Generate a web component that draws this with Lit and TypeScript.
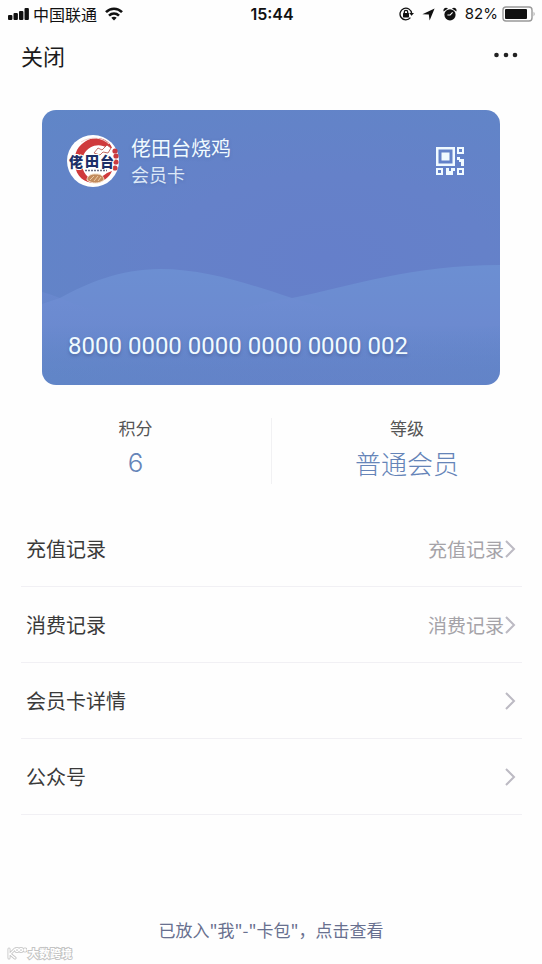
import { LitElement, html, css, nothing } from "lit";
import { customElement, property } from "lit/decorators.js";

@customElement("status-bar")
class StatusBar extends LitElement {
  static styles = css`
    :host {
      display: grid;
      grid-template-columns: 1fr auto 1fr;
      align-items: center;
      height: 28px;
      padding: 0 6px 0 8px;
      color: #111;
      font-size: 16px;
    }
    .left, .right { display: flex; align-items: center; }
    .left { gap: 4px; }
    .right { justify-content: flex-end; gap: 8px; }
    .wifi { margin-left: 4px; }
    .time { font: 600 16px/28px Inter, sans-serif; }
    .level { font: 400 15px/28px Inter, sans-serif; }
    .pair { display: flex; align-items: center; gap: 4px; }
    svg { display: block; }
  `;
  render() {
    return html`
      <div class="left">
        <svg width="21" height="14" viewBox="0 0 21 14" fill="#111">
          <rect x="0" y="8" width="4.400" height="5" rx="1"/><rect x="5.500" y="6" width="4.400" height="7" rx="1"/>
          <rect x="11" y="4" width="4.400" height="9" rx="1"/><rect x="16.500" y="1" width="4.400" height="12" rx="1"/>
        </svg>
        <span>中国联通</span>
        <svg class="wifi" width="18" height="14" viewBox="0 0 18 14" fill="none" stroke="#111" stroke-width="2.6">
          <path d="M1 5.2 C5.5 .6 12.5 .6 17 5.2"/><path d="M4 8.6 C7 5.8 11 5.8 14 8.6"/>
          <path d="M9 13.6 L6.3 10.8 C7.8 9.4 10.2 9.4 11.7 10.8 Z" fill="#111" stroke="none"/>
        </svg>
      </div>
      <span class="time">15:44</span>
      <div class="right">
        <svg width="15" height="14" viewBox="0 0 15 14" fill="none" stroke="#111" stroke-width="1.3">
          <path d="M11.4 10.6 A5.8 5.8 0 1 1 12.6 6.4"/><path d="M10.2 6 H15 L12.6 8.8 Z" fill="#111" stroke="none"/>
          <rect x="4" y="6" width="6" height="4.4" rx=".6" fill="#111" stroke="none"/>
          <path d="M5.3 6.4 V5 A1.7 1.7 0 0 1 8.7 5 V6.4"/>
        </svg>
        <svg width="13" height="13" viewBox="0 0 13 13" fill="#111"><path d="M12.6 .4 L7.6 12.6 L6.8 6.6 L.4 6.2 Z"/></svg>
        <svg width="14" height="14" viewBox="0 0 14 14" fill="#111">
          <circle cx="7" cy="7.8" r="5.6"/>
          <path d="M.6 4.4 C-.2 1.4 2.6 -.4 5 1.4 Z M13.4 4.4 C14.2 1.4 11.4 -.4 9 1.4 Z"/>
          <path d="M7 8.2 L9.6 5.4 M7.2 8 H4.4" stroke="#fff" stroke-width="1.1" fill="none"/>
        </svg>
        <div class="pair">
          <span class="level">82%</span>
          <svg width="34" height="16" viewBox="0 0 34 16">
            <rect x="1" y="1" width="29" height="14" rx="3" fill="#fff" stroke="#999" stroke-width="1.4"/>
            <rect x="3" y="3" width="22" height="10" rx="1" fill="#111"/>
            <path d="M31.6 5.6 Q33.6 8 31.6 10.4 Z" fill="#999"/>
          </svg>
        </div>
      </div>`;
  }
}

@customElement("shop-logo")
class ShopLogo extends LitElement {
  static styles = css`
    :host { display: block; }
    svg { display: block; }
    .name { font: 900 14px "Noto Sans CJK SC", sans-serif; fill: #1d2f68; stroke: #fff; stroke-width: 2px; paint-order: stroke; }
  `;
  render() {
    return html`<svg width="52" height="52" viewBox="0 0 52 52" role="img" aria-label="佬田台">
      <circle cx="26" cy="26" r="26" fill="#fff"/>
      <path d="M10 15 C16 5 28 0 38 5 C42 7 44 10 45 13 L40 13 C33 8 22 10 17 19 C13 28 15 36 21 42 C27 45 34 43 40 38 L45 36 C42 43 36 47 28 48 C17 48 9 41 8 30 C7 24 8 19 10 15 Z" fill="#cf3a3c"/>
      <path d="M14 7 C24 1 35 2 42 9" fill="none" stroke="#f3d5d2" stroke-width="1"/>
      <path d="M27 18 L31 13 L35 15 L40 10 L44 13 L41 18 L36 17 L33 20 Z" fill="#fff" stroke="#b5493f" stroke-width=".8"/>
      <g fill="#c93a40"><circle cx="48" cy="16" r="2.600"/><circle cx="49" cy="21" r="2.600"/><circle cx="49" cy="27" r="2.600"/><circle cx="48" cy="33" r="2.600"/></g>
      <text class="name" x="2" y="32">佬</text>
      <text class="name" x="18" y="31">田</text>
      <text class="name" x="33" y="32">台</text>
      <path d="M18 35.5 H40" stroke="#6d6f83" stroke-width="1.6" stroke-dasharray="2 1"/>
      <path d="M20 45 C20 41 24 38.5 29 39 C34 38.5 37 42 37 45 C32 49 25 49 20 45 Z" fill="#c28b5c" stroke="#f4dfc8" stroke-width="1"/>
      <path d="M23 45 L27 41 M27 46 L31 41 M31 46 L34 42" stroke="#f0d3ae" stroke-width=".9"/>
    </svg>`;
  }
}

@customElement("member-card")
class MemberCard extends LitElement {
  static styles = css`
    :host { display: block; }
    .card {
      display: grid;
      grid-template-rows: auto 1fr auto;
      min-height: 275px;
      box-sizing: border-box;
      padding: 25px 36px 24px 25px;
      border-radius: 14px;
      overflow: hidden;
      position: relative;
      color: #f0faff;
      background: radial-gradient(ellipse at 62% 54%, #657fca 0%, #6581c9 40%, #6086c7 100%);
    }
    .waves { position: absolute; left: 0; bottom: 0; width: 100%; height: 130px; }
    .head, .number { position: relative; }
    .head { display: flex; align-items: center; gap: 12px; }
    .names { flex: 1; text-shadow: 0 1px 3px #4a68a480; }
    .title, .sub { margin: 0; font-weight: 400; line-height: 26px; }
    .title { font-size: 20px; }
    .sub { font-size: 18px; opacity: .86; }
    .qr { border: 0; padding: 0; background: none; color: inherit; }
    .qr svg, .waves { display: block; }
    .number { grid-row: 3; margin: 0 0 0 1px; font: 400 24px/30px Roboto, sans-serif; text-shadow: 0 2px 3px #46598f99; }
  `;
  render() {
    return html`<section class="card">
      <svg class="waves" viewBox="0 0 458 130" preserveAspectRatio="none" aria-hidden="true">
        <defs>
          <linearGradient id="a" x1="0" y1="0" x2="0" y2="1"><stop offset="0" stop-color="#6c8fd2"/><stop offset=".5" stop-color="#6c8ad0"/><stop offset="1" stop-color="#6086c7" stop-opacity="0"/></linearGradient>
          <linearGradient id="b" x1="0" y1="0" x2="0" y2="1"><stop offset="0" stop-color="#718dd5" stop-opacity=".5"/><stop offset=".8" stop-color="#6086c7" stop-opacity="0"/></linearGradient>
        </defs>
        <path d="M0 49 L18 43 C45 28 78 14 118 14 C165 14 210 30 250 43 C310 31 370 10 458 10 V130 H0 Z" fill="url(#a)"/>
        <path d="M0 37 C8 39 12 41 18 43 C60 62 100 64 140 62 C190 60 220 46 250 43 C310 60 370 88 458 70 V130 H0 Z" fill="url(#b)"/>
      </svg>
      <header class="head">
        <shop-logo></shop-logo>
        <div class="names"><h1 class="title">佬田台烧鸡</h1><p class="sub">会员卡</p></div>
        <button class="qr" aria-label="二维码">
          <svg width="28" height="28" viewBox="0 0 28 28" fill="currentColor">
            <path fill-rule="evenodd" d="M0 0H19V19H0Z M2.5 2.5V16.5H16.5V2.5Z M5.500 5.500H13.500V13.500H5.500Z M21 0H28V7H21Z M23 2V5H26V2Z M0 21H7V28H0Z M2 23V26H5V23Z M21 21H28V28H21Z M23 23V26H26V23Z"/>
            <path d="M21 10H24V12H28V19H25V15H23V13H21Z M10 21H13V24H15V21H19V24H17V28H10Z"/>
          </svg>
        </button>
      </header>
      <p class="number">8000 0000 0000 0000 0000 002</p>
    </section>`;
  }
}

@customElement("menu-row")
class MenuRow extends LitElement {
  @property() label = "";
  @property() note = "";
  static styles = css`
    :host { display: block; border-bottom: 1px solid #f1f0f4; }
    .row {
      display: flex;
      align-items: center;
      height: 75px;
      padding: 0 6px 0 5px;
      color: #3a3a3a;
      font-size: 20px;
      text-decoration: none;
    }
    .label { flex: 1; }
    .note { color: #a5a3a8; font-size: 19px; }
    svg { display: block; color: #bcbac3; }
  `;
  render() {
    return html`<a class="row" href="#">
      <span class="label">${this.label}</span>
      ${this.note ? html`<span class="note">${this.note}</span>` : nothing}
      <svg width="12" height="20" viewBox="0 0 12 20" aria-hidden="true">
        <path d="M2 2 L10 10 L2 18" fill="none" stroke="currentColor" stroke-width="2"/>
      </svg>
    </a>`;
  }
}

@customElement("app-root")
class AppRoot extends LitElement {
  static styles = css`
    :host {
      display: flex;
      flex-direction: column;
      min-height: 100vh;
      position: relative;
      background: #fefefe;
      font-family: "Noto Sans CJK SC", sans-serif;
    }
    .nav { display: flex; align-items: center; justify-content: space-between; height: 54px; padding: 0 24px 0 21px; }
    .nav button { border: 0; padding: 0; background: none; color: #1b1b1b; font: 400 22px/30px "Noto Sans CJK SC", sans-serif; }
    .nav svg { display: block; }
    member-card { margin: 28px 42px 0; }
    .stats { display: grid; grid-template-columns: 1fr 1fr; margin: 33px 0 27px; }
    .stat { display: flex; flex-direction: column; align-items: center; height: 66px; margin: 0; }
    .stat + .stat { border-left: 1px solid #f1f1f3; }
    .stat dt { font-size: 17px; line-height: 20px; color: #555; }
    .stat dd { margin: 8px 0 0; font-size: 26px; line-height: 34px; font-weight: 300; color: #6584b8; }
    .stat .digit { font-family: Inter, sans-serif; }
    .menu { margin: 0 20px 0 21px; }
    .foot { margin-top: auto; padding: 20px 0; text-align: center; font-size: 17px; line-height: 28px; }
    .foot a { color: #68708f; text-decoration: none; }
    .mark { position: absolute; left: 7px; bottom: 3px; display: flex; align-items: center; gap: 1px; }
    .mark svg { display: block; }
    .brand { font-size: 11px; line-height: 16px; font-weight: 700; color: #fff; -webkit-text-stroke: 2px #c4c4c4; paint-order: stroke fill; }
  `;
  render() {
    return html`
      <status-bar></status-bar>
      <nav class="nav">
        <button>关闭</button>
        <button aria-label="更多"><svg width="24" height="6" viewBox="0 0 24 6" fill="#222"><circle cx="2.5" cy="3" r="2.3"/><circle cx="12" cy="3" r="2.3"/><circle cx="21" cy="3" r="2.3"/></svg></button>
      </nav>
      <member-card></member-card>
      <div class="stats">
        <dl class="stat"><dt>积分</dt><dd class="digit">6</dd></dl>
        <dl class="stat"><dt>等级</dt><dd>普通会员</dd></dl>
      </div>
      <div class="menu">
        <menu-row label="充值记录" note="充值记录"></menu-row>
        <menu-row label="消费记录" note="消费记录"></menu-row>
        <menu-row label="会员卡详情"></menu-row>
        <menu-row label="公众号"></menu-row>
      </div>
      <footer class="foot"><a href="#">已放入"我"-"卡包"，点击查看</a></footer>
      <div class="mark">
        <svg width="20" height="14" viewBox="0 0 20 14" fill="none" stroke-linecap="round">
          <g stroke="#c4c4c4" stroke-width="3"><path d="M2 3V12M8 3L3 8L8 12"/><circle cx="10" cy="4" r="1.5"/><circle cx="14" cy="4" r="1.5"/><circle cx="18" cy="4" r="1"/></g>
          <g stroke="#fff" stroke-width="1.3"><path d="M2 3V12M8 3L3 8L8 12"/><circle cx="10" cy="4" r="1.5"/><circle cx="14" cy="4" r="1.5"/><circle cx="18" cy="4" r="1"/></g>
        </svg>
        <span class="brand">大数跨境</span>
      </div>`;
  }
}
